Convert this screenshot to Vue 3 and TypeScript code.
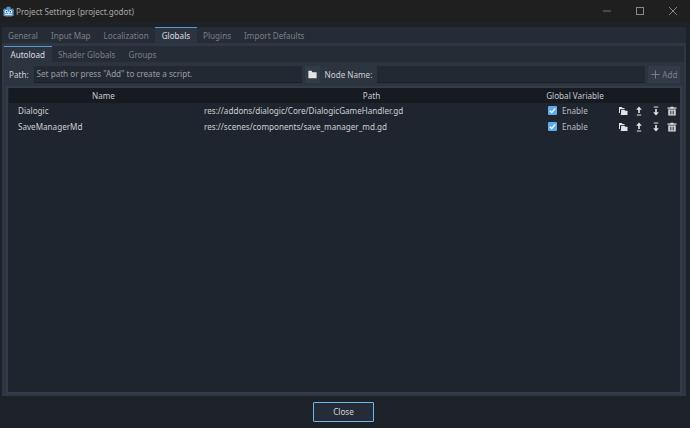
<script setup lang="ts">
const mainTabs = ['General', 'Input Map', 'Localization', 'Globals', 'Plugins', 'Import Defaults']
const subTabs = ['Autoload', 'Shader Globals', 'Groups']
const rows = [
  { name: 'Dialogic', path: 'res://addons/dialogic/Core/DialogicGameHandler.gd' },
  { name: 'SaveManagerMd', path: 'res://scenes/components/save_manager_md.gd' },
]
</script>

<template>
  <div class="window">
    <header class="titlebar">
      <svg class="logo" viewBox="0 0 14 14" width="13" height="13">
        <path d="M1 5.500 L3 3.500 L4.500 4.500 L5 2 L9 2 L9.500 4.500 L11 3.500 L13 5.500 L12.500 7 L12.500 11.500 Q7 13.500 1.500 11.500 L1.500 7 Z" fill="#5299d2" />
        <circle cx="4.700" cy="7.200" r="1.700" fill="#fff" />
        <circle cx="9.300" cy="7.200" r="1.700" fill="#fff" />
        <circle cx="4.900" cy="7.300" r="0.800" fill="#333" />
        <circle cx="9.100" cy="7.300" r="0.800" fill="#333" />
        <rect x="6.400" y="7.800" width="1.200" height="1.600" fill="#fff" />
        <path d="M3 10.200 H11" stroke="#fff" stroke-width="0.800" />
      </svg>
      <span class="title">Project Settings (project.godot)</span>
      <div class="winbtns">
        <svg viewBox="0 0 10 10" width="10" height="10"><path d="M1 5 H9" stroke="#777" /></svg>
        <svg viewBox="0 0 10 10" width="10" height="10"><rect x="1.500" y="1.500" width="7" height="7" fill="none" stroke="#888" /></svg>
        <svg viewBox="0 0 10 10" width="10" height="10"><path d="M1 1 L9 9 M9 1 L1 9" stroke="#888" /></svg>
      </div>
    </header>

    <main class="body">
      <nav class="tabs main-tabs">
        <span v-for="t in mainTabs" :key="t" class="tab" :class="{ active: t === 'Globals' }">{{ t }}</span>
      </nav>
      <section class="panel">
        <nav class="tabs sub-tabs">
          <span v-for="t in subTabs" :key="t" class="tab" :class="{ active: t === 'Autoload' }">{{ t }}</span>
        </nav>
        <section class="inner">
          <div class="toolbar">
            <label class="lbl">Path:</label>
            <div class="input path">Set path or press "Add" to create a script.</div>
            <button class="folder-btn">
              <svg viewBox="0 0 12 12" width="11" height="11"><path d="M1.500 2 H5 L6 3.500 H10.500 V10 H1.500 Z" fill="#e4e4e4" /></svg>
            </button>
            <label class="lbl node">Node Name:</label>
            <div class="input name"></div>
            <button class="add-btn">
              <svg viewBox="0 0 10 10" width="9" height="9"><path d="M5 0.500 V9.500 M0.500 5 H9.500" stroke="#7b8087" stroke-width="1.100" /></svg>
              <span>Add</span>
            </button>
          </div>
          <div class="tree">
            <div class="thead">
              <span class="th c-name">Name</span>
              <span class="th c-path">Path</span>
              <span class="th c-var">Global Variable</span>
              <span class="th c-act"></span>
            </div>
            <div v-for="r in rows" :key="r.name" class="row">
              <span class="td c-name">{{ r.name }}</span>
              <span class="td c-path">{{ r.path }}</span>
              <span class="td c-var">
                <span class="check">
                  <svg viewBox="0 0 9 9" width="9" height="9"><path d="M1.800 4.800 L3.700 6.600 L7.300 2.300" fill="none" stroke="#fff" stroke-width="1.300" /></svg>
                </span>
                Enable
              </span>
              <span class="td c-act">
                <svg viewBox="0 0 10 10" width="10" height="10"><path d="M1 1 H3.800 L4.500 2 H6.500 V3 H3 Q2 3 2 4 V7 H1 Z M3.200 3.800 H6.500 L7.200 4.800 H9.500 V9 H2 Q3 9 3 8 Z" fill="#e4e4e4" /></svg>
                <svg viewBox="0 0 10 10" width="10" height="10"><path d="M5 0.500 L7.800 3.800 H5.800 V7 H4.200 V3.800 H2.200 Z M2.800 8.400 H7.200 V9.400 H2.800 Z" fill="#e4e4e4" /></svg>
                <svg viewBox="0 0 10 10" width="10" height="10"><path d="M5 9.500 L7.800 6.200 H5.800 V3 H4.200 V6.200 H2.200 Z M2.800 0.600 H7.200 V1.600 H2.800 Z" fill="#e4e4e4" /></svg>
                <svg viewBox="0 0 10 10" width="10" height="10"><path d="M3.500 0.800 H6.500 V1.600 H9.500 V2.800 H0.500 V1.600 H3.500 Z M1.300 3.600 H8.700 V9.500 H1.300 Z" fill="#e4e4e4" /><path d="M3.300 4.600 V8.500 M5 4.600 V8.500 M6.700 4.600 V8.500" stroke="#1f252e" stroke-width="0.800" /></svg>
              </span>
            </div>
          </div>
        </section>
      </section>
      <footer class="footer">
        <button class="close">Close</button>
      </footer>
    </main>
  </div>
</template>

<style scoped>
.window {
  width: 690px;
  height: 428px;
  display: flex;
  flex-direction: column;
  background: #1d2229;
  color: #c8cacd;
  font-family: "Noto Sans", sans-serif;
  font-size: 8.120px;
  overflow: hidden;
}
.titlebar {
  height: 22px;
  flex: none;
  display: flex;
  align-items: center;
  background: #1f1f1f;
  padding-left: 2px;
}
.logo { margin-right: 1px; }
.title { color: #a8a8a8; }
.winbtns {
  margin-left: auto;
  display: flex;
  gap: 23px;
  padding-right: 12px;
}
.body {
  flex: 1;
  display: flex;
  flex-direction: column;
  padding: 5px 4px 0 2px;
  min-height: 0;
}
.tabs { display: flex; flex: none; height: 16px; background: #262c36; }
.tab {
  display: flex;
  align-items: center;
  padding: 0 6.500px;
  color: #7a7f87;
  border-top: 1px solid transparent;
  white-space: nowrap;
}
.main-tabs .tab:first-child { padding-left: 6px; }
.tab.active {
  background: #2c3440;
  color: #dcdee0;
  border-top-color: #569ad0;
}
.panel {
  flex: 1;
  min-height: 0;
  display: flex;
  flex-direction: column;
  background: #2f3744;
  padding: 3px 2px 2px;
}
.inner {
  flex: 1;
  min-height: 0;
  background: #2c3440;
  padding: 4px 2px 0;
  display: flex;
  flex-direction: column;
  gap: 3px;
}
.toolbar { display: flex; align-items: center; height: 17px; flex: none; white-space: nowrap; }
.lbl { color: #cdcfd2; margin-left: 3px; margin-right: 5px; }
.lbl.node { margin-left: 5px; margin-right: 5px; }
.input {
  height: 17px;
  box-sizing: border-box;
  background: #232933;
  border-bottom: 1px solid #1a1e25;
  padding: 0 3px;
  line-height: 16px;
  color: #9a9da2;
  width: 268px;
  flex: none;
}
.folder-btn, .add-btn {
  height: 17px;
  border: none;
  background: #333b48;
  padding: 0;
  margin-left: 3px;
  display: flex;
  align-items: center;
  font: inherit;
  flex: none;
}
.folder-btn { width: 15px; justify-content: center; }
.add-btn { width: 32px; color: #7b8087; gap: 2px; padding-left: 3px; box-sizing: border-box; }
.tree {
  flex: 1;
  min-height: 0;
  background: #1f252e;
  border: 2px solid #343c4a;
  padding-left: 1px;
}
.thead, .row { display: flex; align-items: center; }
.thead { height: 15px; background: #161b22; }
.row { height: 16px; box-sizing: border-box; padding-bottom: 1px; }
.th { text-align: center; color: #c8cacd; }
.c-name { width: 189px; flex: none; }
.c-path { width: 347px; flex: none; }
.c-var { width: 60px; flex: none; }
.c-act { flex: 1; }
.td { color: #cdcfd2; box-sizing: border-box; }
.td.c-name { padding-left: 9px; }
.td.c-path { padding-left: 6px; }
.td.c-var { display: flex; align-items: center; gap: 5px; padding-left: 3px; color: #b9bcbf; }
.check {
  width: 9px;
  height: 9px;
  background: #5eaaea;
  border-radius: 1px;
  display: flex;
  flex: none;
}
.td.c-act { display: flex; justify-content: flex-end; gap: 6.500px; padding-right: 3px; }
.footer {
  height: 32px;
  flex: none;
  display: flex;
  align-items: center;
  justify-content: center;
  padding: 0 1px 1px 0;
  box-sizing: border-box;
}
.close {
  width: 61px;
  height: 20px;
  background: #262c37;
  border: 1px solid #6bb7f0;
  border-radius: 1px;
  color: #d4d6d9;
  font: inherit;
  padding: 0;
}
</style>
